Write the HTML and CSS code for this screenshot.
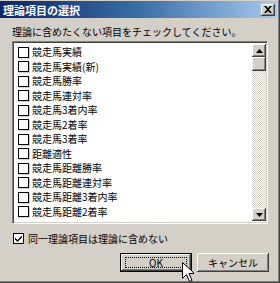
FILE: index.html
```html
<!DOCTYPE html>
<html lang="ja">
<head>
<meta charset="utf-8">
<link rel="stylesheet" href="styles.css">
</head>
<body>
<div class="window">
  <div class="titlebar">
    <span class="title">理論項目の選択</span>
    <span class="close"><svg width="8" height="7" viewBox="0 0 8 7"><path d="M0 0h2l2 2 2-2h2L5 3.5 8 7H6L4 5 2 7H0l3-3.5z" fill="#000"/></svg></span>
  </div>
  <div class="body">
    <div class="label">理論に含めたくない項目をチェックしてください。</div>
    <div class="listbox">
      <div class="items">
        <div class="item"><span class="cb"></span>競走馬実績</div>
        <div class="item"><span class="cb"></span>競走馬実績(新)</div>
        <div class="item"><span class="cb"></span>競走馬勝率</div>
        <div class="item"><span class="cb"></span>競走馬連対率</div>
        <div class="item"><span class="cb"></span>競走馬3着内率</div>
        <div class="item"><span class="cb"></span>競走馬2着率</div>
        <div class="item"><span class="cb"></span>競走馬3着率</div>
        <div class="item"><span class="cb"></span>距離適性</div>
        <div class="item"><span class="cb"></span>競走馬距離勝率</div>
        <div class="item"><span class="cb"></span>競走馬距離連対率</div>
        <div class="item"><span class="cb"></span>競走馬距離3着内率</div>
        <div class="item"><span class="cb"></span>競走馬距離2着率</div>
        <div class="item"><span class="cb"></span>競走馬距離3着率</div>
      </div>
      <div class="scrollbar">
        <div class="sbtn"><svg width="7" height="4" viewBox="0 0 7 4"><path d="M3.5 0L7 4H0z" fill="#000"/></svg></div>
        <div class="thumb"></div>
        <div class="track"></div>
        <div class="sbtn"><svg width="7" height="4" viewBox="0 0 7 4"><path d="M0 0h7L3.5 4z" fill="#000"/></svg></div>
      </div>
    </div>
    <div class="option"><span class="cb checked"><svg width="7" height="7" viewBox="0 0 7 7"><path d="M0 2.5l2.5 2.5L7 0.5V2.5L2.5 7 0 4.5z" fill="#000"/></svg></span>同一理論項目は理論に含めない</div>
    <div class="buttons">
      <div class="btn default"><span class="focus">OK</span></div>
      <div class="btn">キャンセル</div>
    </div>
  </div>
  <svg class="cursor" width="12" height="20" viewBox="0 0 12 20"><path d="M0.5 0.5V16.5L4.5 12.5L7.5 19.5L10 18.5L7 11.5H12.5Z" fill="#fff" stroke="#000" stroke-width="1"/></svg>
</div>
</body>
</html>
```
FILE: styles.css
```css
* { box-sizing: border-box; }
html, body { margin: 0; padding: 0; }
body {
  width: 280px;
  height: 283px;
  overflow: hidden;
  background: #d4d0c8;
  font-family: "Noto Sans CJK JP", "Noto Sans", sans-serif;
  font-size: 10px;
  color: #000;
}
.window {
  position: relative;
  width: 280px;
  height: 283px;
  border-right: 1px solid #404040;
  border-bottom: 1px solid #404040;
  box-shadow: inset -1px -1px 0 #808080;
  display: flex;
  flex-direction: column;
}
.titlebar {
  height: 17px;
  margin: 1px 2px 0 0;
  background: linear-gradient(to right, #0a246a 0%, #3a6ea5 50%, #a6caf0 100%);
  display: flex;
  align-items: center;
  justify-content: space-between;
  padding: 0 1px 0 3px;
}
.title {
  color: #fff;
  font-weight: bold;
  font-size: 11px;
  line-height: 14px;
}
.close {
  width: 14px;
  height: 12px;
  background: #d4d0c8;
  box-shadow: inset -1px -1px 0 #404040, inset 1px 1px 0 #fff, inset -2px -2px 0 #808080;
  display: flex;
  align-items: center;
  justify-content: center;
  margin-right: 1px;
}
.body {
  flex: 1;
  display: flex;
  flex-direction: column;
  padding: 7px 10px 0 12px;
}
.label {
  line-height: 14px;
  height: 16px;
  white-space: nowrap;
}
.listbox {
  height: 183px;
  width: 256px;
  background: #fff;
  border-top: 1px solid #808080;
  border-left: 1px solid #808080;
  border-right: 1px solid #fff;
  border-bottom: 1px solid #fff;
  box-shadow: inset 1px 1px 0 #404040, inset -1px -1px 0 #d4d0c8;
  padding: 2px 2px 2px 2px;
  display: flex;
  overflow: hidden;
}
.items {
  flex: 1;
  padding: 1px 0 0 3px;
  overflow: hidden;
}
.item {
  height: 14.5px;
  display: flex;
  align-items: center;
  white-space: nowrap;
  line-height: 14px;
}
.cb {
  width: 11px;
  height: 11px;
  flex: none;
  background: #fff;
  border: 1px solid #000;
  box-shadow: 1px 1px 0 #d4d0c8;
  margin-right: 3px;
  display: flex;
  align-items: center;
  justify-content: center;
}
.scrollbar {
  width: 14px;
  display: flex;
  flex-direction: column;
  margin-right: -1px;
}
.sbtn, .thumb {
  height: 13px;
  flex: none;
  background: #d4d0c8;
  box-shadow: inset -1px -1px 0 #404040, inset 1px 1px 0 #fff, inset -2px -2px 0 #808080;
  display: flex;
  align-items: center;
  justify-content: center;
}
.thumb { height: 14px; }
.track {
  flex: 1;
  background: repeating-conic-gradient(#d4d0c8 0 25%, #fff 0 50%) 0 0 / 2px 2px;
}
.option {
  display: flex;
  align-items: center;
  height: 14px;
  margin-top: 7px;
  margin-left: 1px;
  white-space: nowrap;
}
.option .cb { margin-right: 4px; }
.buttons {
  display: flex;
  justify-content: flex-end;
  gap: 5px;
  margin-top: 8px;
  padding-right: 0;
}
.btn {
  width: 72px;
  height: 19px;
  background: #d4d0c8;
  box-shadow: inset -1px -1px 0 #404040, inset 1px 1px 0 #fff, inset -2px -2px 0 #808080;
  display: flex;
  align-items: center;
  justify-content: center;
  font-size: 10px;
}
.btn.default {
  border: 1px solid #000;
}
.focus {
  width: calc(100% - 8px);
  height: calc(100% - 6px);
  border: 1px dotted #000;
  display: flex;
  align-items: center;
  justify-content: center;
  line-height: 10px;
}
.cursor {
  position: absolute;
  left: 182px;
  top: 262px;
}
```
